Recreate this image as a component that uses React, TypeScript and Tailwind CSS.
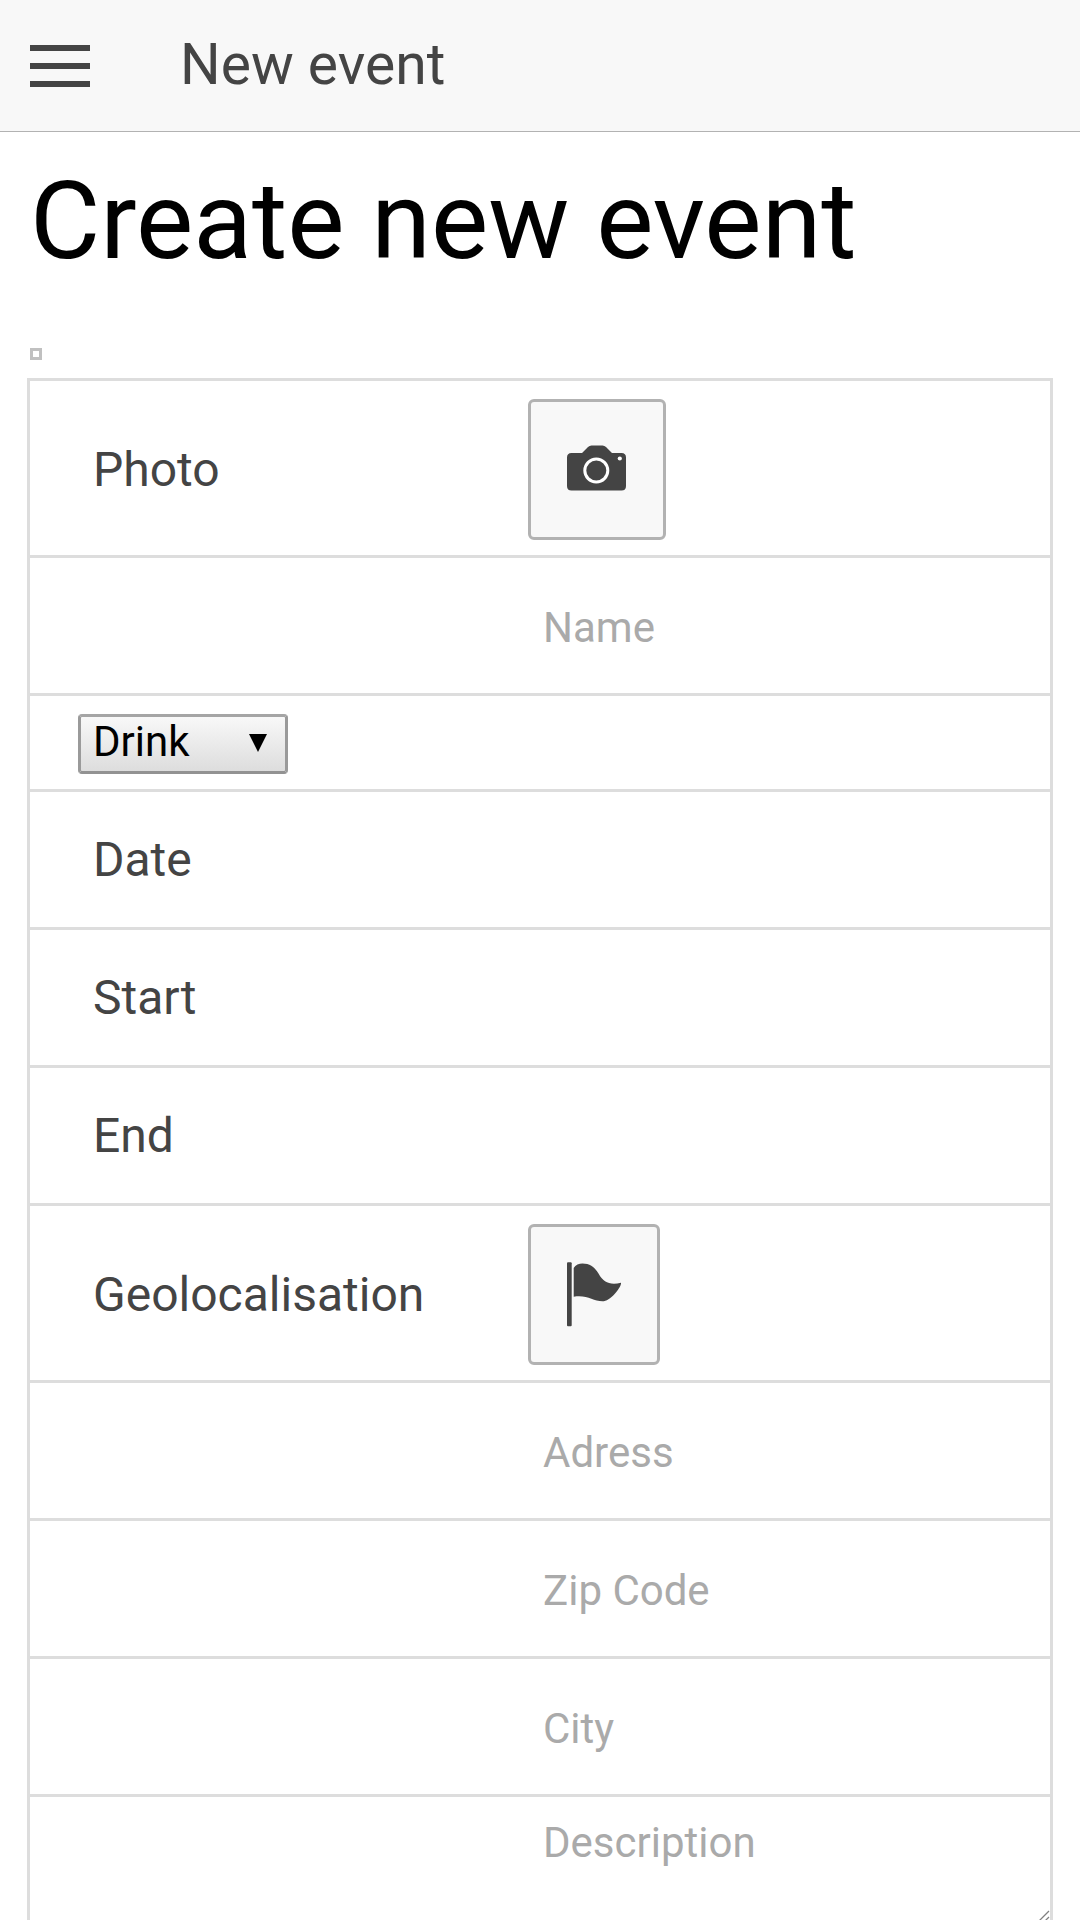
import React from "react";

function Row({ height, label, children }: { height: string; label?: string; children?: React.ReactNode }) {
  return (
    <div className={`flex shrink-0 items-center border-b-3 border-[#ddd] ${height}`}>
      <div className="w-[498px] shrink-0 pl-[63px] text-[48px] leading-[56px] text-[#444]">{label}</div>
      {children}
    </div>
  );
}

function TextField({ placeholder }: { placeholder: string }) {
  return (
    <input
      placeholder={placeholder}
      className="h-[114px] w-[510px] bg-transparent pt-1 pl-[15px] text-[42px] text-[#444] outline-none placeholder:text-[#aaa]"
    />
  );
}

function CameraIcon() {
  return (
    <svg width="60" height="60" viewBox="0.5 0 60 60" className="block">
      <path
        d="M5 10H15.5L21.5 4Q23 2.500 25 2.500H36Q38 2.500 39.500 4L45.500 10H55Q59.500 10 59.500 14.500V43Q59.500 47.500 55 47.500H5Q.5 47.500 .5 43V14.500Q.5 10 5 10Z"
        fill="#444"
      />
      <circle cx="29.800" cy="27.500" r="11.500" fill="none" stroke="#fff" strokeWidth="3" />
      <circle cx="53.300" cy="15.500" r="2.100" fill="#fff" />
    </svg>
  );
}

function FlagIcon() {
  return (
    <svg width="54" height="66" viewBox="0 0 54 66" className="block">
      <rect width="4.700" height="64" y=".3" rx="1" fill="#444" />
      <path
        d="M6.700 6C8.500 2.800 12 1.500 15.500 1.500C23 1.500 28 5.500 31.500 11.500C36.500 20.500 43 23.500 54 20.800C54.500 25 43.500 39.300 35.500 39.300C26 39.300 20 32.500 6.700 34.800Z"
        fill="#444"
      />
    </svg>
  );
}

export default function App() {
  return (
    <div className="flex h-[1920px] w-[1080px] flex-col overflow-hidden bg-white font-['Roboto',sans-serif]">
      <header className="flex h-[132px] shrink-0 items-center border-b border-[#b2b2b2] bg-[#f8f8f8] pt-px pl-[30px]">
        <div className="flex h-[42px] w-[60px] flex-col justify-between">
          <span className="h-1.5 bg-[#444]" />
          <span className="h-1.5 bg-[#444]" />
          <span className="h-1.5 bg-[#444]" />
        </div>
        <div className="pb-[3px] pl-[90px] text-[57px] leading-[68px] text-[#444]">New event</div>
      </header>
      <h1 className="mt-[26px] ml-[30px] shrink-0 text-[108px] leading-[126px] text-black">Create new event</h1>
      <div className="mt-[64px] ml-[30px] size-3 shrink-0 border-3 border-[#c0c0c0]" />
      <main className="mt-[18px] ml-[27px] flex h-[1600px] w-[1026px] shrink-0 flex-col border-3 border-[#ddd]">
        <Row height="h-[177px] pt-[3px]" label="Photo">
          <button className="flex h-[141px] w-[138px] items-center justify-center rounded-md border-3 border-[#b2b2b2] bg-[#f8f8f8] pt-1.5">
            <CameraIcon />
          </button>
        </Row>
        <Row height="h-[138px]"><TextField placeholder="Name" /></Row>
        <div className="flex h-[96px] shrink-0 items-center border-b-3 border-[#ddd] pt-[3px] pl-12">
          <button className="flex h-[60px] w-[210px] items-center justify-between rounded-[4px] border-3 border-t-[#a5a5a5] border-x-[#9a9a9a] border-b-[#929292] bg-linear-to-b from-[#f8f8f8] to-[#ddd] pr-[17px] pb-1 pl-3 text-[42px] leading-[50px] text-black">
            <span>Drink</span>
            <svg width="20" height="18" viewBox="0 -1 20 18" className="overflow-visible"><path d="M1 0H19L10 18Z" /></svg>
          </button>
        </div>
        <Row height="h-[138px]" label="Date" />
        <Row height="h-[138px]" label="Start" />
        <Row height="h-[138px]" label="End" />
        <Row height="h-[177px] pt-[3px]" label="Geolocalisation">
          <button className="flex h-[141px] w-[132px] items-center justify-center rounded-md border-3 border-[#b2b2b2] bg-[#f8f8f8]">
            <FlagIcon />
          </button>
        </Row>
        <Row height="h-[138px]"><TextField placeholder="Adress" /></Row>
        <Row height="h-[138px]"><TextField placeholder="Zip Code" /></Row>
        <Row height="h-[138px]"><TextField placeholder="City" /></Row>
        <div className="relative flex h-[180px] shrink-0 pl-[498px]">
          <textarea
            placeholder="Description"
            className="h-[160px] w-[522px] resize-none bg-transparent pt-[21px] pl-[15px] text-[42px] leading-[50px] text-[#444] outline-none placeholder:text-[#aaa]"
          />
          <svg width="20" height="20" viewBox="0 0 20 20" className="absolute top-[112px] right-0" fill="none" stroke="#808080" strokeWidth="1.300">
            <path d="M19 2L2 19M19 8L8 19M19 14L14 19" />
          </svg>
        </div>
      </main>
    </div>
  );
}
